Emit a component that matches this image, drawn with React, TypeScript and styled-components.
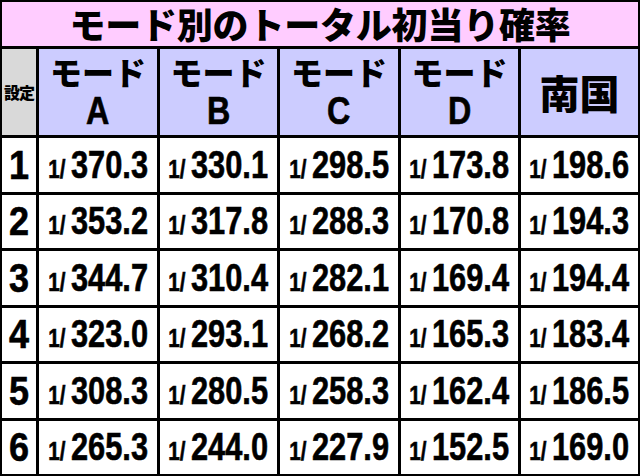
import styled, { createGlobalStyle } from "styled-components";

const GlobalStyle = createGlobalStyle`
  html, body {
    margin: 0;
    padding: 0;
    background: #ffffff;
  }
`;

const NUM_FONT = `"Liberation Sans", Arial, sans-serif`;
const JP_FONT = `"Noto Sans CJK JP", "Noto Sans", sans-serif`;

const Table = styled.div`
  box-sizing: border-box;
  width: 640px;
  height: 476px;
  padding: 2px;
  background: #000000;
  display: grid;
  grid-template-columns: 34px 118px 117px 118px 117px 117px;
  grid-template-rows: 44px 86px repeat(6, 1fr);
  gap: 3px;
`;

const Title = styled.div`
  grid-column: 1 / -1;
  background: #ffccff;
  display: flex;
  align-items: center;
  justify-content: center;
  font-family: ${JP_FONT};
  font-weight: 900;
  font-size: 36px;
  line-height: 1.2;
  color: #000;
  letter-spacing: -0.2px;
`;

const Cell = styled.div<{ $bg?: string }>`
  background: ${(p) => p.$bg || "#ffffff"};
  display: flex;
  align-items: center;
  justify-content: center;
  color: #000;
  overflow: hidden;
  white-space: nowrap;
`;

/* condensed look: Arial-width bold squeezed horizontally */
const Squeeze = styled.span<{ $x?: number }>`
  display: inline-flex;
  align-items: baseline;
  font-family: ${NUM_FONT};
  font-weight: 700;
  -webkit-text-stroke: 0.6px #000;
  transform: scaleX(${(p) => p.$x ?? 0.84});
`;

const SettingLabel = styled(Cell)`
  font-family: ${JP_FONT};
  font-weight: 900;
  font-size: 16px;
  letter-spacing: -1px;
`;

const ModeHead = styled(Cell)`
  flex-direction: column;
  gap: 2px;
`;

const ModeWord = styled.span`
  font-family: ${JP_FONT};
  font-weight: 900;
  font-size: 32px;
  line-height: 36px;
`;

const ModeLetter = styled(Squeeze)`
  font-size: 38px;
  line-height: 40px;
`;

const RegionHead = styled(Cell)`
  font-family: ${JP_FONT};
  font-weight: 900;
  font-size: 40px;
  line-height: 1.2;
`;

const SettingNum = styled(Squeeze)`
  font-size: 40px;
  line-height: 1.2;
`;

const Small = styled.span`
  font-size: 26px;
  margin-right: 7px;
`;

const Big = styled.span`
  font-size: 39px;
`;

const modes = ["A", "B", "C", "D"];

const rows: string[][] = [
  ["370.3", "330.1", "298.5", "173.8", "198.6"],
  ["353.2", "317.8", "288.3", "170.8", "194.3"],
  ["344.7", "310.4", "282.1", "169.4", "194.4"],
  ["323.0", "293.1", "268.2", "165.3", "183.4"],
  ["308.3", "280.5", "258.3", "162.4", "186.5"],
  ["265.3", "244.0", "227.9", "152.5", "169.0"],
];

export default function App() {
  return (
    <>
      <GlobalStyle />
      <Table>
        <Title>モード別のトータル初当り確率</Title>
        <SettingLabel $bg="#d9d9d9">設定</SettingLabel>
        {modes.map((m) => (
          <ModeHead key={m} $bg="#ccccff">
            <ModeWord>モード</ModeWord>
            <ModeLetter $x={0.85}>{m}</ModeLetter>
          </ModeHead>
        ))}
        <RegionHead $bg="#ccccff">南国</RegionHead>
        {rows.map((r, i) => [
          <Cell key={`s${i}`}>
            <SettingNum $x={0.9}>{i + 1}</SettingNum>
          </Cell>,
          ...r.map((v, j) => (
            <Cell key={`p${i}-${j}`}>
              <Squeeze $x={0.79}>
                <Small>1/</Small>
                <Big>{v}</Big>
              </Squeeze>
            </Cell>
          )),
        ])}
      </Table>
    </>
  );
}
